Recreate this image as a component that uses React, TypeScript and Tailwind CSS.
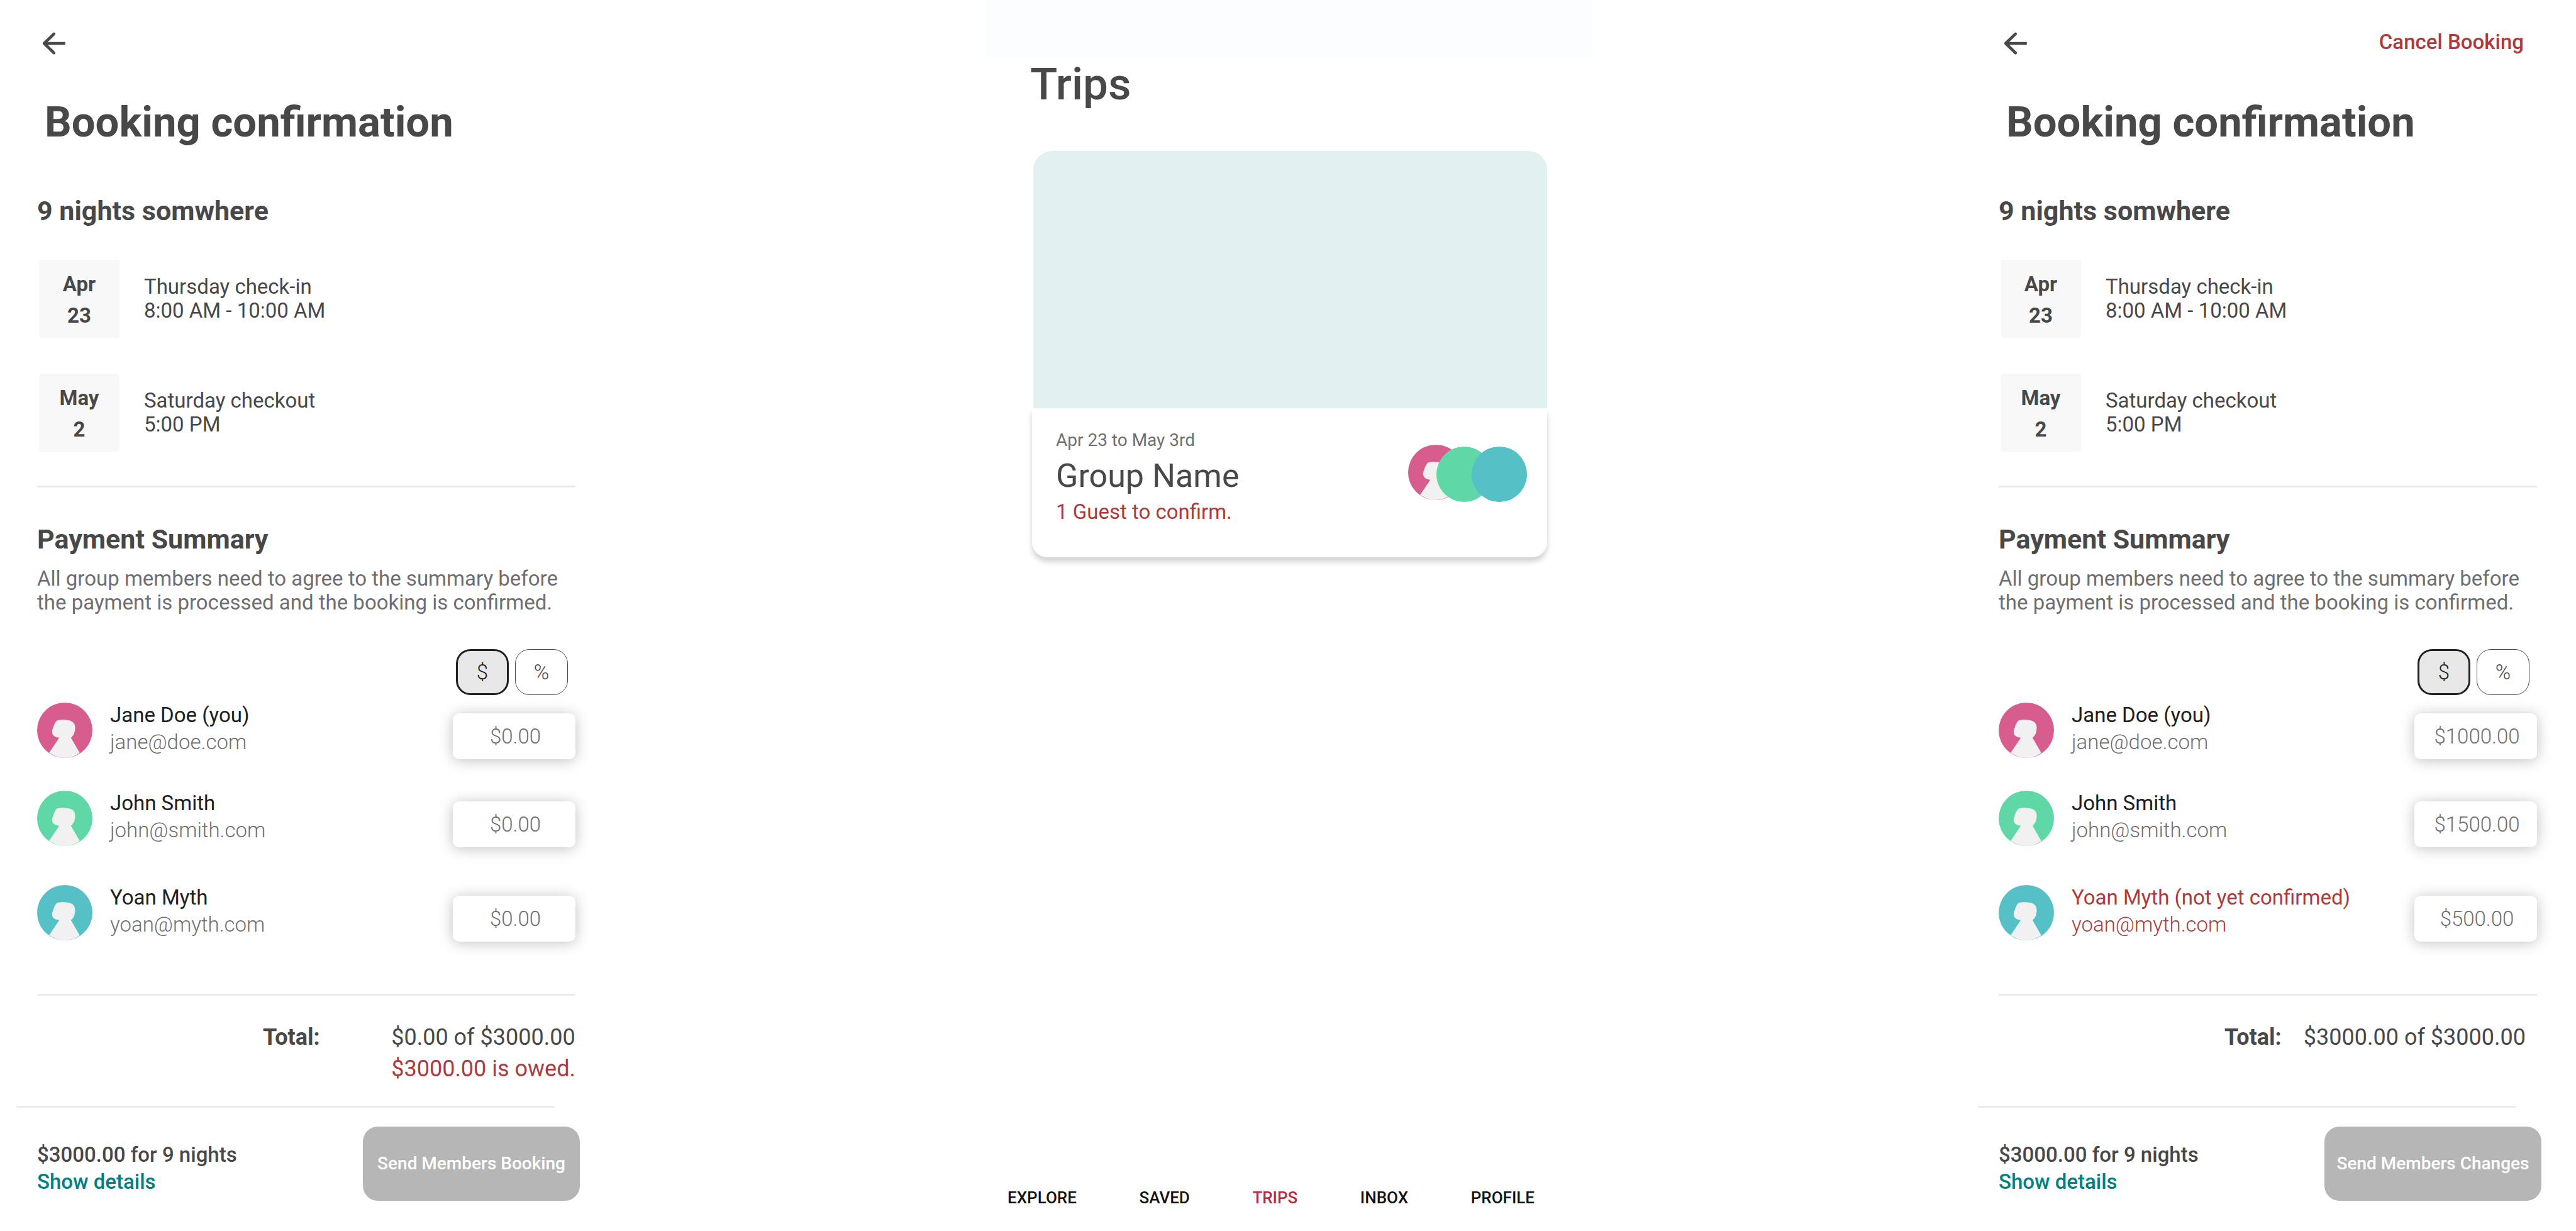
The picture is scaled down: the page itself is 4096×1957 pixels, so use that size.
import { useState } from "react";

type Member = {
  id: string;
  name: string;
  email: string;
  color: string;
  amount: string;
  pending?: boolean;
  spacing: string;
};

type BookingProps = {
  id: string;
  members: Member[];
  total: string;
  owed?: string;
  action: string;
  cancellable?: boolean;
};

function Avatar({ color, blank = false, className = "" }: { color: string; blank?: boolean; className?: string }) {
  return (
    <svg viewBox="52 79 432 432" className={`size-[88px] shrink-0 ${className}`} aria-hidden="true">
      <circle cx="268" cy="295" r="216" fill={color} />
      {!blank && (
        <path
          fill="#f1f1f1"
          d="M225 353C198 351 167 338 169 302C170 288 176 284 179 268C184 250 193 240 199 228C205 217 218 214 230 214C255 212 275 212 295 216C330 222 349 240 349 275C348 312 337 337 316 353L384 470C350 497 310 509 268 511C220 509 180 491 146 470Z"
        />
      )}
    </svg>
  );
}

function BackArrow() {
  return (
    <svg viewBox="0 0 24 24" className="size-[54px]" fill="none" stroke="#484848" strokeWidth="2.1" aria-hidden="true">
      <path d="M11.9 5.3L5 12l6.9 6.7" strokeLinecap="round" strokeLinejoin="round" />
      <path d="M5 12h14.9" />
    </svg>
  );
}

function DateRow({ month, day, title, time }: { month: string; day: string; title: string; time: string }) {
  return (
    <div className="flex items-center gap-[39px]">
      <div className="ml-[3px] h-[124px] w-[128px] rounded bg-[#f8f8f8] pt-3.5 text-center text-[33px]/[50px] font-bold">
        <p>{month}</p>
        <p>{day}</p>
      </div>
      <div className="text-[33px]/[38px]">
        <p>{title}</p>
        <p>{time}</p>
      </div>
    </div>
  );
}

function MemberRow({ screen, member }: { screen: string; member: Member }) {
  const fieldId = `${screen}-${member.id}`;
  return (
    <li className={`flex h-[92px] ${member.spacing}`}>
      <Avatar color={member.color} className="mt-0.5" />
      <div className="ml-7 flex-1 text-[33px]/[43px]">
        <label htmlFor={fieldId} className={member.pending ? "block text-[#ad3b3b]" : "block text-[#202020]"}>
          {member.name}
        </label>
        <p className={member.pending ? "font-light text-[#ad3b3b]" : "font-light text-[#6f6f6f]"}>{member.email}</p>
      </div>
      <input
        id={fieldId}
        type="text"
        defaultValue={member.amount}
        className="h-[73px] w-[195px] self-end rounded-[10px] bg-white pl-1 text-center text-[33px]/[38px] font-light text-[#6f6f6f] shadow-[0_2px_22px_rgba(0,0,0,0.25)] outline-none"
      />
    </li>
  );
}

function UnitToggle() {
  const [unit, setUnit] = useState("$");
  const base = "h-[73px] w-[84px] rounded-[23px] text-[33px]/[38px] font-light ";
  return (
    <div className="mt-[55px] mr-3 flex justify-end gap-2.5" role="group" aria-label="Split unit">
      {["$", "%"].map((u) => (
        <button
          key={u}
          type="button"
          aria-pressed={unit === u}
          onClick={() => setUnit(u)}
          className={
            base + (unit === u ? "border-3 border-[#202020] bg-[#e7e7e7] text-[#202020]" : "border border-[#484848] text-[#484848]")
          }
        >
          {u}
        </button>
      ))}
    </div>
  );
}

function Booking({ id, members, total, owed, action, cancellable }: BookingProps) {
  return (
    <section className="flex min-h-screen flex-col text-[#484848]">
      <div className="pr-[62px] pl-[59px]">
        <header className="flex h-24 items-end justify-between">
          <button type="button" aria-label="Back">
            <BackArrow />
          </button>
          {cancellable && (
            <a href="#cancel" className="mr-[21px] mb-2.5 text-[33px]/[38px] font-medium text-[#ad3b3b]">
              Cancel Booking
            </a>
          )}
        </header>
        <h1 className="mt-[59px] pl-3 text-[67px]/[78px] font-bold">Booking confirmation</h1>
        <h2 className="mt-[77px] text-[43px]/[50px] font-bold">9 nights somwhere</h2>
        <div className="mt-[53px] flex flex-col gap-[57px]">
          <DateRow month="Apr" day="23" title="Thursday check-in" time="8:00 AM - 10:00 AM" />
          <DateRow month="May" day="2" title="Saturday checkout" time="5:00 PM" />
        </div>
        <hr className="mt-[54px] border-t-3 border-[#ebebeb]" />
        <h2 className="mt-[57px] text-[43px]/[50px] font-bold">Payment Summary</h2>
        <p className="mt-[19px] text-[33px]/[38px] text-[#6f6f6f]">
          All group members need to agree to the summary before the payment is processed and the booking is confirmed.
        </p>
        <UnitToggle />
        <ul>
          {members.map((m) => (
            <MemberRow key={m.id} screen={id} member={m} />
          ))}
        </ul>
        <hr className="mt-[83px] border-t-3 border-[#ebebeb]" />
        <div className="mt-[41px] flex text-[36px]/[50px]">
          <p className="ml-[359px] flex-1 font-bold">Total:</p>
          <div className={owed ? "" : "mr-[18px]"}>
            <p>{total}</p>
            {owed && <p className="text-[#ad3b3b]">{owed}</p>}
          </div>
        </div>
      </div>
      <footer className="mt-auto pb-12">
        <hr className="mr-[95px] ml-[26px] border-t-3 border-[#ebebeb]" />
        <div className="mt-[30px] flex items-end justify-between pr-[55px] pl-[59px]">
          <div className="pb-[9px] text-[33px]/[43px] font-medium">
            <p>$3000.00 for 9 nights</p>
            <a href="#details" className="text-[#008080]">
              Show details
            </a>
          </div>
          <button type="button" className="h-[118px] w-[345px] rounded-3xl bg-[#b6b6b6] text-[28px]/[32px] font-medium whitespace-nowrap text-white">
            {action}
          </button>
        </div>
      </footer>
    </section>
  );
}

function Trips() {
  const tabs = ["EXPLORE", "SAVED", "TRIPS", "INBOX", "PROFILE"];
  return (
    <section className="flex min-h-screen flex-col text-[#484848]">
      <div className="h-[92px] bg-[#fcfdff]" />
      <h1 className="pl-[71px] text-[71px]/[84px] font-medium">Trips</h1>
      <article className="mt-16 mr-[72px] ml-[74px]">
        <div className="ml-0.5 h-[409px] rounded-t-[30px] bg-[#e1f1ef]" />
        <div className="flex h-[237px] items-start justify-between rounded-b-3xl bg-white pr-8 pl-[38px] shadow-[0_7px_8px_rgba(0,0,0,0.18)]">
          <div className="pt-[34px]">
            <p className="text-[28px]/[34px] text-[#6f6f6f]">Apr 23 to May 3rd</p>
            <h2 className="mt-2.5 text-[52px]/[60px]">Group Name</h2>
            <p className="mt-2 text-[33px]/[38px] text-[#ad3b3b]">1 Guest to confirm.</p>
          </div>
          <div className="flex pt-[58px]">
            <Avatar color="#d75d8f" />
            <Avatar color="#60d7a7" blank className="mt-[3px] -ml-[43px]" />
            <Avatar color="#56c0c7" blank className="mt-[3px] -ml-8" />
          </div>
        </div>
      </article>
      <nav className="mt-auto flex justify-between pr-[92px] pb-[37px] pl-[35px] text-[26px]/[32px] font-medium text-[#111111]">
        {tabs.map((t) => (
          <a key={t} href={`#${t.toLowerCase()}`} className={t === "TRIPS" ? "text-[#b52a3f]" : ""}>
            {t}
          </a>
        ))}
      </nav>
    </section>
  );
}

const draft: Member[] = [
  { id: "jane", name: "Jane Doe (you)", email: "jane@doe.com", color: "#d75d8f", amount: "$0.00", spacing: "mt-2.5" },
  { id: "john", name: "John Smith", email: "john@smith.com", color: "#60d7a7", amount: "$0.00", spacing: "mt-12" },
  { id: "yoan", name: "Yoan Myth", email: "yoan@myth.com", color: "#56c0c7", amount: "$0.00", spacing: "mt-[58px]" },
];

const shared: Member[] = [
  { ...draft[0], amount: "$1000.00" },
  { ...draft[1], amount: "$1500.00" },
  { ...draft[2], name: "Yoan Myth (not yet confirmed)", amount: "$500.00", pending: true },
];

export default function App() {
  return (
    <main className="grid min-h-screen grid-cols-[977fr_590fr_965fr_587fr_977fr] bg-white font-['Roboto',sans-serif]">
      <Booking id="draft" members={draft} total="$0.00 of $3000.00" owed="$3000.00 is owed." action="Send Members Booking" />
      <div className="col-start-3">
        <Trips />
      </div>
      <div className="col-start-5">
        <Booking id="shared" members={shared} total="$3000.00 of $3000.00" action="Send Members Changes" cancellable />
      </div>
    </main>
  );
}
